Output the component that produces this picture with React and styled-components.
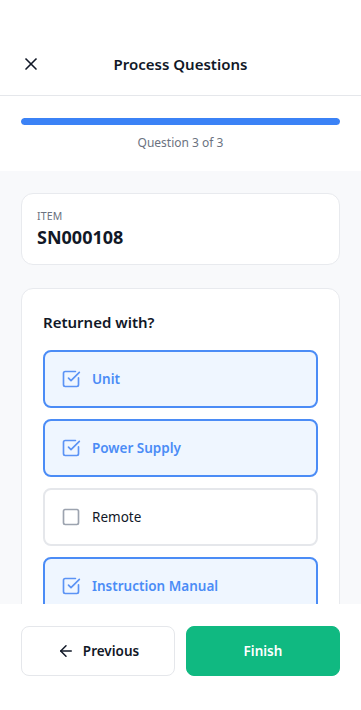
import styled, { createGlobalStyle } from "styled-components"
import { X, ArrowLeft, SquareCheckBig, Square } from "lucide-react"

const GlobalStyle = createGlobalStyle`
  html, body { margin: 0; padding: 0; }
  body {
    font-family: "Noto Sans", "Open Sans", sans-serif;
    background: #ffffff;
    color: #111827;
  }
  * { box-sizing: border-box; }
`;

const Screen = styled.div`
  width: 100%;
  height: 100vh;
  display: flex;
  flex-direction: column;
  overflow: hidden;
  background: #ffffff;
`;

const Header = styled.header`
  flex-shrink: 0;
  height: 96px;
  padding-top: 32px;
  display: grid;
  grid-template-columns: 62px 1fr 62px;
  align-items: center;
  border-bottom: 1px solid #e5e7eb;
`;

const IconButton = styled.button`
  border: none;
  background: none;
  padding: 0;
  margin-left: 21px;
  display: flex;
  color: #111827;
  cursor: pointer;
`;

const Title = styled.h1`
  margin: 0;
  text-align: center;
  font-size: 15px;
  font-weight: 600;
  color: #111827;
`;

const ProgressSection = styled.div`
  flex-shrink: 0;
  padding: 22px 21px 20px;
  display: flex;
  flex-direction: column;
  align-items: center;
  gap: 9px;
`;

const Track = styled.div`
  width: 100%;
  height: 7px;
  border-radius: 4px;
  background: #e5e7eb;
  overflow: hidden;
`;

const Fill = styled.div`
  height: 100%;
  background: #3b82f6;
  border-radius: 4px;
`;

const Counter = styled.span`
  font-size: 12px;
  color: #6b7280;
`;

const Content = styled.main`
  flex: 1;
  overflow: hidden;
  background: #f8f9fb;
  padding: 22px 21px;
  display: flex;
  flex-direction: column;
  gap: 23px;
`;

const Card = styled.section`
  background: #ffffff;
  border: 1px solid #e8eaee;
  border-radius: 12px;
  padding: ${(p) => p.$padding};
  flex-shrink: 0;
`;

const Label = styled.div`
  font-size: 10.5px;
  color: #6b7280;
  letter-spacing: 0.2px;
  margin-bottom: 2px;
`;

const ItemCode = styled.div`
  font-size: 18px;
  font-weight: 700;
  color: #111827;
`;

const Question = styled.h2`
  margin: 0 0 18px;
  font-size: 15px;
  font-weight: 600;
  color: #111827;
`;

const Options = styled.div`
  display: flex;
  flex-direction: column;
  gap: 11px;
`;

const Option = styled.label`
  height: 58px;
  display: flex;
  align-items: center;
  gap: 11px;
  padding: 0 16px;
  border-radius: 8px;
  border: 2px solid ${(p) => (p.$checked ? "#4b8cf6" : "#e5e7eb")};
  background: ${(p) => (p.$checked ? "#eff6ff" : "#ffffff")};
  color: ${(p) => (p.$checked ? "#4b8cf6" : "#111827")};
  font-size: 13.5px;
  font-weight: ${(p) => (p.$checked ? 600 : 400)};
  cursor: pointer;

  svg {
    flex-shrink: 0;
    color: ${(p) => (p.$checked ? "#5b93f5" : "#9ca3af")};
  }
`;

const Footer = styled.footer`
  flex-shrink: 0;
  background: #ffffff;
  padding: 22px 21px 34px;
  display: grid;
  grid-template-columns: 1fr 1fr;
  gap: 11px;
`;

const Button = styled.button`
  height: 50px;
  border-radius: 8px;
  border: 1px solid ${(p) => (p.$primary ? "#10b981" : "#e5e7eb")};
  background: ${(p) => (p.$primary ? "#10b981" : "#ffffff")};
  color: ${(p) => (p.$primary ? "#ffffff" : "#111827")};
  font-family: inherit;
  font-size: 13.5px;
  font-weight: 600;
  display: flex;
  align-items: center;
  justify-content: center;
  gap: 8px;
  cursor: pointer;
`;

const options = [
  { label: "Unit", checked: true },
  { label: "Power Supply", checked: true },
  { label: "Remote", checked: false },
  { label: "Instruction Manual", checked: true },
  { label: "Other", checked: false },
];

const App = () => {
  return (
    <>
      <GlobalStyle />
      <Screen>
        <Header>
          <IconButton aria-label="Close">
            <X size={20} strokeWidth={2} />
          </IconButton>
          <Title>Process Questions</Title>
          <span />
        </Header>
        <ProgressSection>
          <Track>
            <Fill style={{ width: `${(3 / 3) * 100}%` }} />
          </Track>
          <Counter>Question 3 of 3</Counter>
        </ProgressSection>
        <Content>
          <Card $padding="15px 15px">
            <Label>ITEM</Label>
            <ItemCode>SN000108</ItemCode>
          </Card>
          <Card $padding="23px 21px">
            <Question>Returned with?</Question>
            <Options>
              {options.map((o) => (
                <Option key={o.label} $checked={o.checked}>
                  {o.checked ? (
                    <SquareCheckBig size={20} strokeWidth={2} />
                  ) : (
                    <Square size={20} strokeWidth={2} />
                  )}
                  {o.label}
                </Option>
              ))}
            </Options>
          </Card>
        </Content>
        <Footer>
          <Button>
            <ArrowLeft size={18} strokeWidth={2} />
            Previous
          </Button>
          <Button $primary>Finish</Button>
        </Footer>
      </Screen>
    </>
  )
}

export default App
